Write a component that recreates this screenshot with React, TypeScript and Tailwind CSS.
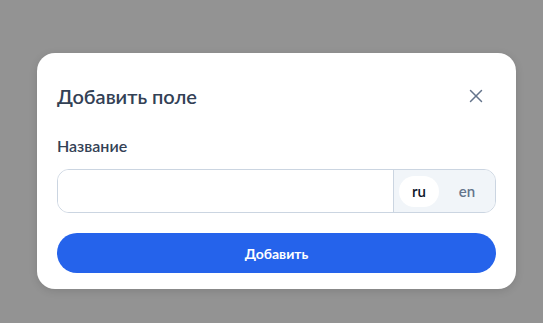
import { X } from "lucide-react";

export default function App() {
  return (
    <div
      className="min-h-[323px] w-full bg-[#939393] pl-[37px] pt-[53px]"
      style={{ fontFamily: "Lato, 'Noto Sans', sans-serif" }}
    >
      <div className="w-[479px] rounded-[18px] bg-white px-5 pb-4 pt-5 shadow-[0_2px_8px_rgba(0,0,0,0.12)]">
        <div className="flex h-[45px] items-center justify-between">
          <h2 className="text-[20px] font-semibold text-[#334155]">Добавить поле</h2>
          <button className="mr-[8px] flex h-6 w-6 items-center justify-center text-[#64748b]">
            <X size={22} strokeWidth={1.6} />
          </button>
        </div>
        <div className="mt-[18px] text-[16px] font-semibold leading-5 text-[#334155]">Название</div>
        <div className="mt-[13px] flex h-[44px] overflow-hidden rounded-[12px] border border-[#cbd5e1]">
          <input className="min-w-0 flex-1 bg-white px-3 text-[15px] outline-none" />
          <div className="flex items-center gap-[5px] border-l border-[#cbd5e1] bg-[#f1f5f9] px-[5px]">
            <span className="flex h-[31px] w-[40px] items-center justify-center rounded-full bg-white text-[15px] font-semibold text-[#0f172a]">
              ru
            </span>
            <span className="flex h-[31px] w-[46px] items-center justify-center rounded-full text-[15px] font-semibold text-[#64748b]">
              en
            </span>
          </div>
        </div>
        <button className="mt-5 flex h-[40px] w-full items-center justify-center rounded-full bg-[#2563eb] text-[14px] font-bold text-white">
          Добавить
        </button>
      </div>
    </div>
  );
}
